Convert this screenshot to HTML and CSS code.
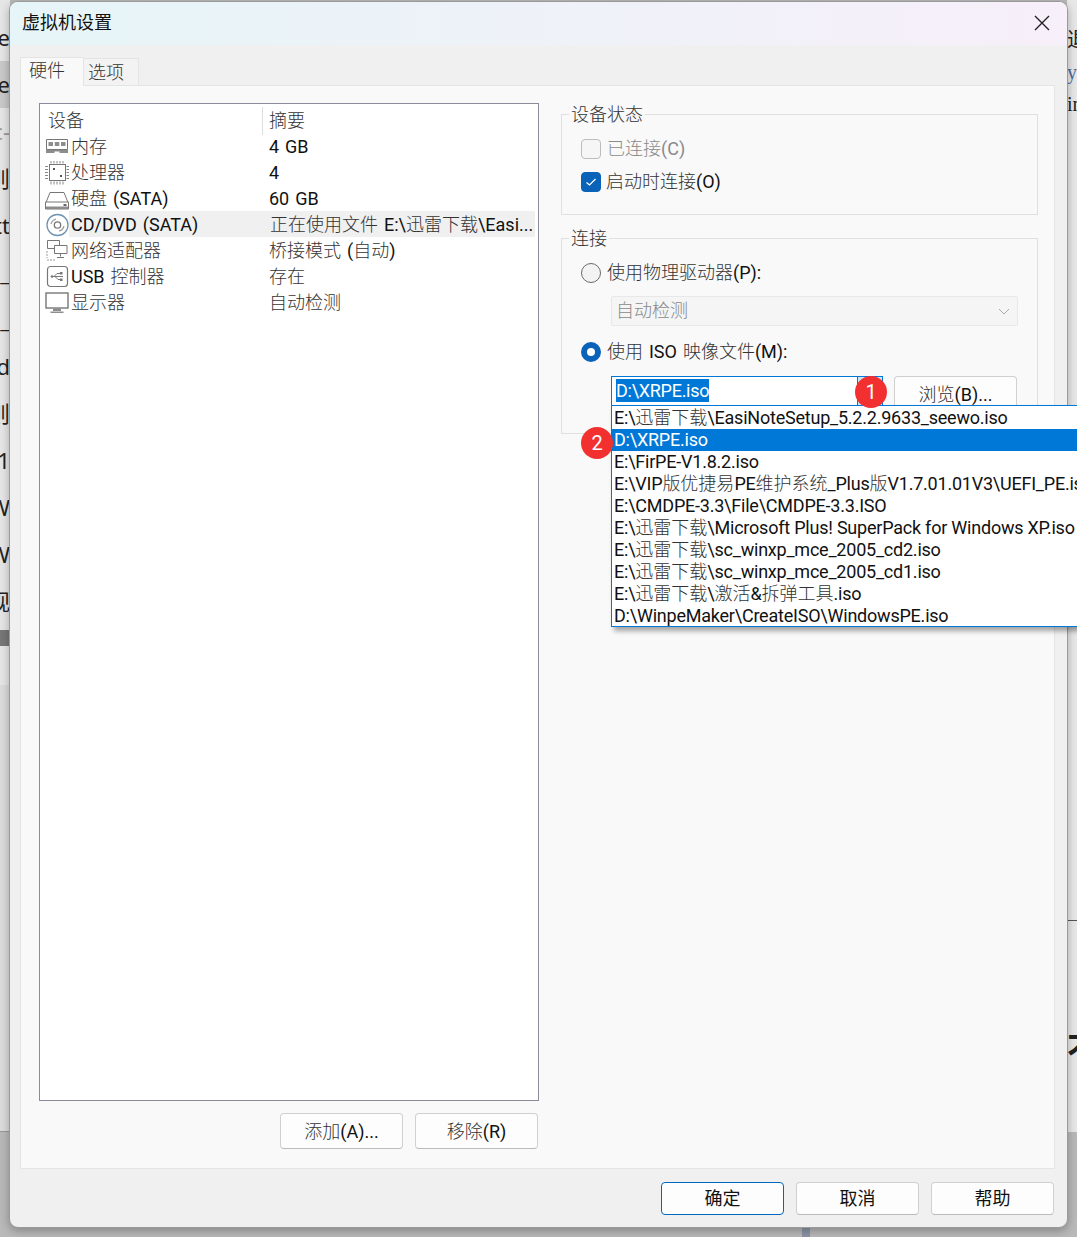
FILE: index.html
```html
<!DOCTYPE html>
<html lang="zh-CN">
<head>
<meta charset="utf-8">
<title>虚拟机设置</title>
<link rel="stylesheet" href="styles.css">
</head>
<body>
<div class="backdrop">
  <div class="bg-left">
    <div class="bg-row">Se</div>
    <div class="bg-row bg-row-hi">Se</div>
    <div class="bg-row bg-faint">c-</div>
    <div class="bg-row">则</div>
    <div class="bg-row">tt</div>
    <div class="bg-row">2_</div>
    <div class="bg-row">2_</div>
    <div class="bg-row">d</div>
    <div class="bg-row">则</div>
    <div class="bg-row">1</div>
    <div class="bg-row">W</div>
    <div class="bg-row">W</div>
    <div class="bg-row">观</div>
    <div class="bg-bar"></div>
  </div>
  <div class="bg-right">
    <div class="bg-r-row">退</div>
    <div class="bg-r-row bg-blue">y</div>
    <div class="bg-r-row">in</div>
  </div>
  <div class="bg-right-line"></div>
  <div class="bg-right-mark">不</div>
  <div class="bg-bottom"></div>
  <div class="bg-stem"></div>
</div>

<div class="dialog">
  <header class="titlebar">
    <span class="title">虚拟机设置</span>
    <svg class="close" width="16" height="16" viewBox="0 0 16 16"><path d="M1 1l14 14M15 1L1 15" stroke="#222" stroke-width="1.4" fill="none"/></svg>
  </header>
  <nav class="tabs">
    <div class="tab tab-active">硬件</div>
    <div class="tab">选项</div>
  </nav>
  <section class="panel">
    <div class="left">
      <div class="list">
        <div class="row head"><div class="c1"><span class="label zh">设备</span></div><div class="c2 sep">摘要</div></div>
        <div class="row">
          <div class="c1">
            <svg class="ico" viewBox="0 0 24 24"><path d="M1.500 4.500h21v10h-21z" fill="#fff" stroke="#777"/><path d="M3.500 7h4.500v4H3.500zM9.800 7h4.500v4H9.800zM16 7h4.500v4H16z" fill="#8d8d8d"/><path d="M1 15h22v3H14.500v-1.500h-5V18H1z" fill="#8d8d8d"/></svg>
            <span class="label zh">内存</span>
          </div>
          <div class="c2">4 GB</div>
        </div>
        <div class="row">
          <div class="c1">
            <svg class="ico" viewBox="0 0 24 24"><rect x="4.500" y="3.500" width="16" height="16" fill="#fff" stroke="#777"/><path d="M6 0v2.500M9 0v2.500M12 0v2.500M15 0v2.500M18 0v2.500M6 20.500v3M9 20.500v3M12 20.500v3M15 20.500v3M18 20.500v3M0 5.500h3M0 8.500h3M0 11.500h3M0 14.500h3M0 17.500h3M21.500 5.500h2.500M21.500 8.500h2.500M21.500 11.500h2.500M21.500 14.500h2.500M21.500 17.500h2.500" stroke="#888" fill="none"/><path d="M8 7h2v2H8zM15 14h2v2h-2z" fill="#555"/></svg>
            <span class="label zh">处理器</span>
          </div>
          <div class="c2">4</div>
        </div>
        <div class="row">
          <div class="c1">
            <svg class="ico" viewBox="0 0 24 24"><path d="M1 15.500 5 5.500h14l4 10z" fill="#fff" stroke="#777"/><path d="M.500 15h23v7H.500z" fill="#fff" stroke="#777"/><path d="M1 19.500h22V22H1z" fill="#8d8d8d"/><path d="M18.500 17h3v2h-3z" fill="#666"/></svg>
            <span class="label"><span class="zh">硬盘</span> (SATA)</span>
          </div>
          <div class="c2">60 GB</div>
        </div>
        <div class="row row-sel">
          <div class="c1">
            <svg class="ico" viewBox="0 0 24 24"><circle cx="12.500" cy="12" r="10.500" fill="#fff" stroke="#6f93b0" stroke-width="1.300"/><circle cx="12.500" cy="12" r="3.200" fill="#fff" stroke="#777" stroke-width="1.300"/><path d="M6 11a7 7 0 0 1 5-5M19 13a7 7 0 0 1-5 5" fill="none" stroke="#999" stroke-width="1.200"/></svg>
            <span class="label">CD/DVD (SATA)</span>
          </div>
          <div class="c2 c2-clip"><span class="zh">正在使用文件</span> E:\<span class="zh">迅雷下载</span>\Easi...</div>
        </div>
        <div class="row">
          <div class="c1">
            <svg class="ico" viewBox="0 0 24 24"><path d="M2.500 1.500h12v8h-12z" fill="#fff" stroke="#777"/><path d="M9.500 6.500h12.500v8H9.500z" fill="#fff" stroke="#777"/><path d="M15.500 14.500v3M12 18.500h7" stroke="#777" fill="none"/><path d="M2 12v7M2 21h8" stroke="#999" stroke-dasharray="2 1" fill="none"/></svg>
            <span class="label zh">网络适配器</span>
          </div>
          <div class="c2"><span class="zh">桥接模式</span> (<span class="zh">自动</span>)</div>
        </div>
        <div class="row">
          <div class="c1">
            <svg class="ico" viewBox="0 0 24 24"><rect x="2.500" y="1.500" width="20" height="20" rx="3" fill="#fff" stroke="#777" stroke-width="1.200"/><path d="M6 11.500h12M9 11.500l3-3h3M10 11.500l3 3h2" fill="none" stroke="#777"/><circle cx="7" cy="11.500" r="1.300" fill="#777"/><path d="M15 7h2.500v2.500H15zM15 13.500h2.500V16H15z" fill="#777"/></svg>
            <span class="label">USB <span class="zh">控制器</span></span>
          </div>
          <div class="c2 zh">存在</div>
        </div>
        <div class="row">
          <div class="c1">
            <svg class="ico" viewBox="0 0 24 24"><rect x="1" y="2" width="22" height="15" fill="#fff" stroke="#777" stroke-width="1.400"/><path d="M8 17.500h8V20H8zM5.500 20.500h13V22h-13z" fill="#8d8d8d"/></svg>
            <span class="label zh">显示器</span>
          </div>
          <div class="c2 zh">自动检测</div>
        </div>
      </div>
      <div class="list-actions">
        <button class="btn"><span class="zh">添加</span>(A)...</button>
        <button class="btn"><span class="zh">移除</span>(R)</button>
      </div>
    </div>

    <div class="right">
      <fieldset class="group group-status">
        <legend class="zh">设备状态</legend>
        <label class="opt opt-disabled"><span class="check"></span><span><span class="zh">已连接</span>(C)</span></label>
        <label class="opt"><span class="check check-on"><svg width="12" height="10" viewBox="0 0 12 10"><path d="M1.500 5.500 4.500 8 10.500 2" stroke="#fff" stroke-width="1.200" fill="none"/></svg></span><span class="tight"><span class="zh">启动时连接</span>(O)</span></label>
      </fieldset>
      <fieldset class="group group-conn">
        <legend class="zh">连接</legend>
        <label class="opt"><span class="radio"></span><span><span class="zh">使用物理驱动器</span>(P):</span></label>
        <div class="select"><span class="zh">自动检测</span><svg width="12" height="7" viewBox="0 0 12 7"><path d="M1 1l5 5 5-5" stroke="#aaa" fill="none"/></svg></div>
        <label class="opt opt-iso"><span class="radio radio-on"></span><span><span class="zh">使用</span> ISO <span class="zh">映像文件</span>(M):</span></label>
        <div class="iso-row">
          <div class="combo"><span class="combo-text"><span class="selected-text">D:\XRPE.iso</span></span><span class="combo-arrow"></span></div>
          <button class="btn btn-browse"><span class="zh">浏览</span>(B)...</button>
        </div>
      </fieldset>
    </div>
  </section>
  <footer class="footer">
    <button class="btn btn-foot btn-default zh">确定</button>
    <button class="btn btn-foot zh">取消</button>
    <button class="btn btn-foot zh">帮助</button>
  </footer>
</div>

<ul class="dropdown">
  <li>E:\<span class="zh">迅雷下载</span>\EasiNoteSetup_5.2.2.9633_seewo.iso</li>
  <li class="li-sel">D:\XRPE.iso</li>
  <li>E:\FirPE-V1.8.2.iso</li>
  <li>E:\VIP<span class="zh">版优捷易</span>PE<span class="zh">维护系统</span>_Plus<span class="zh">版</span>V1.7.01.01V3\UEFI_PE.iso</li>
  <li>E:\CMDPE-3.3\File\CMDPE-3.3.ISO</li>
  <li>E:\<span class="zh">迅雷下载</span>\Microsoft Plus! SuperPack for Windows XP.iso</li>
  <li>E:\<span class="zh">迅雷下载</span>\sc_winxp_mce_2005_cd2.iso</li>
  <li>E:\<span class="zh">迅雷下载</span>\sc_winxp_mce_2005_cd1.iso</li>
  <li>E:\<span class="zh">迅雷下载</span>\<span class="zh">激活</span>&amp;<span class="zh">拆弹工具</span>.iso</li>
  <li>D:\WinpeMaker\CreateISO\WindowsPE.iso</li>
</ul>
<span class="badge badge-1">1</span>
<span class="badge badge-2">2</span>
</body>
</html>
```
FILE: styles.css
```css
* { box-sizing: border-box; }
html, body { margin: 0; padding: 0; }
body {
  width: 1077px;
  height: 1237px;
  position: relative;
  overflow: hidden;
  background: #b9b9b9;
  font: 18px/24px Roboto, "Noto Sans CJK SC", sans-serif;
  word-spacing: 1.5px;
  color: #111;
}
.zh { font-weight: 300; color: #333; letter-spacing: 0; }
.backdrop { position: absolute; inset: 0; overflow: hidden; }
.bg-left {
  position: absolute; left: 0; top: 14px; width: 10px; height: 671px;
  background: #e6e6e6; overflow: hidden;
  font: 22px/47px "Noto Sans", "Noto Sans CJK SC", sans-serif;
  box-shadow: 0 -14px 0 #e6e6e6;
}
.bg-row { height: 47px; display: flex; justify-content: flex-end; white-space: nowrap; color: #222; }
.bg-row-hi { background: #c9c9c9; }
.bg-faint { color: #999; }
.bg-bar { height: 16px; margin-top: 5px; background: #777; }
.bg-right {
  position: absolute; left: 1067px; top: 0; width: 10px; height: 1132px;
  background: #e8e8e8; overflow: hidden; padding-top: 24px;
  font: 20px/32px "Liberation Serif", "Noto Sans CJK SC", serif;
  color: #222;
}
.bg-r-row { height: 32px; white-space: nowrap; }
.bg-blue { color: #4b6a99; }
.bg-right-line { position: absolute; left: 1067px; top: 920px; width: 10px; height: 20px; border-top: 1px solid #555; border-left: 1px solid #3c5a80; }
.bg-right-mark {
  position: absolute; left: 1067px; top: 1028px; width: 10px; overflow: hidden;
  font: 700 32px/36px "Noto Sans CJK SC", sans-serif; color: #222;
}
.bg-bottom { position: absolute; left: 0; top: 685px; width: 10px; height: 447px; background: #dcdcdc; border-bottom: 1px solid #999; }
.bg-stem { position: absolute; left: 802px; top: 1225px; width: 8px; height: 12px; background: #8b94a6; }

.dialog {
  position: absolute; left: 9px; top: 1px;
  width: 1059px; height: 1227px;
  background: #f0f0f0;
  border: 1px solid #9a9a9a;
  border-radius: 9px;
  box-shadow: 0 3px 10px rgba(0,0,0,.28);
  display: flex; flex-direction: column;
  overflow: hidden;
}
.titlebar {
  height: 43px; flex: none;
  display: flex; align-items: center; justify-content: space-between;
  padding: 0 17px 2px 12px;
  background: linear-gradient(90deg, #e6f5f8, #f7eff9);
}
.title { color: #111; font-weight: 400; }
.close { flex: none; }
.tabs { display: flex; align-items: flex-end; height: 40px; flex: none; padding-left: 10px; }
.tab { width: 56px; height: 27px; background: #f3f3f3; border: 1px solid #e4e4e4; border-bottom: 0; font-weight: 300; color: #333; line-height: 27px; text-align: left; padding-left: 4px; }
.tab-active { width: 63px; background: #f9f9f9; border-right: 0; position: relative; z-index: 1; margin-bottom: -1px; height: 29px; padding-left: 8px; line-height: 26px; }
.panel {
  margin: 0 12px 0 10px;
  height: 1084px; flex: none;
  background: #f9f9f9;
  border: 1px solid #e5e5e5;
  padding: 17px 16px 18px 18px;
  display: grid; grid-template-columns: 500px 477px; column-gap: 22px;
}
.left { display: flex; flex-direction: column; }
.list { height: 998px; background: #fff; border: 1px solid #8b8b9b; padding: 3px 3px 0 0; }
.row { display: grid; grid-template-columns: 222px 1fr; height: 26px; line-height: 28px; white-space: nowrap; }
.c1 { display: flex; align-items: center; padding-left: 5px; }
.c2 { padding-left: 7px; }
.head .c1 { padding-left: 8px; }
.sep { border-left: 1px solid #ddd; padding-left: 6px; font-weight: 300; color: #333; }
.ico { width: 24px; height: 24px; flex: none; margin-right: 2px; }
.row-sel { background: linear-gradient(90deg, #fff 0, #fff 29px, #f0f0f0 29px); }
.c2-clip { overflow: hidden; padding-left: 8px; }
.list-actions { display: flex; justify-content: flex-end; gap: 12px; margin-top: 12px; padding-right: 1px; }
.btn {
  width: 123px; height: 36px;
  background: #fdfdfd; border: 1px solid #d0d0d0; border-bottom-color: #bbb; border-radius: 4px;
  font: inherit; word-spacing: inherit; color: #111; padding: 2px 0 0; white-space: nowrap;
}

.right { display: flex; flex-direction: column; }
.group { margin: 0; border: 1px solid #e0e0e0; padding: 0 19px; min-width: 0; }
.group legend { margin-left: -12px; padding: 2px 2px 0; line-height: 24px; font-weight: 300; color: #333; }
.group-status { height: 114px; margin-top: -2px; padding-top: 5px; }
.group-conn { height: 209px; margin-top: 10px; padding-top: 5px; }
.opt { display: flex; align-items: center; gap: 6px; height: 33px; }
.tight { margin-left: -1px; }
.opt-disabled, .opt-disabled .zh { color: #8a8a8a; }
.check { width: 20px; height: 20px; border: 1px solid #bdbdbd; border-radius: 4px; background: #f6f6f6; flex: none; display: flex; align-items: center; justify-content: center; }
.check-on { background: #0a63b8; border-color: #0a63b8; }
.radio { width: 20px; height: 20px; border: 1px solid #6a6a6a; border-radius: 50%; background: #f3f3f3; flex: none; }
.radio-on { border: 6px solid #0a63b8; background: #fff; }
.select {
  margin: 7px 0 0 30px; width: 407px; height: 30px;
  background: #f5f5f5; border: 1px solid #e8e8e8; border-radius: 2px;
  display: flex; align-items: center; justify-content: space-between;
  padding: 0 7px 0 4px;
}
.select .zh { color: #888; }
.opt-iso { margin-top: 9px; }
.iso-row { display: flex; gap: 11px; margin: 8px 0 0 30px; align-items: flex-start; }
.combo { width: 272px; height: 30px; background: #fff; border: 1px solid #0078d7; display: flex; }
.combo-text { flex: 1; padding-left: 4px; line-height: 27px; letter-spacing: -.27px; }
.selected-text { background: #0078d7; color: #fff; display: inline-block; line-height: 23px; margin-top: 2px; }
.combo-arrow { width: 25px; background: #cce4f7; border-left: 1px solid #0078d7; }
.btn-browse { height: 36px; }

.footer { display: flex; justify-content: flex-end; gap: 12px; padding: 13px 13px 0 0; }
.btn-foot { height: 33px; padding-top: 0; }
.btn-default { border: 1px solid #0067c0; }

.dropdown {
  position: absolute; left: 611px; top: 405px; width: 480px; height: 222px;
  margin: 0; padding: 1px 0 0 3px; list-style: none;
  background: #fff; border: 1px solid #0078d7;
  box-shadow: 3px 4px 5px rgba(0,0,0,.35);
  white-space: nowrap; overflow: hidden; letter-spacing: -.22px; word-spacing: 0;
}
.dropdown li { height: 22px; line-height: 22px; margin-left: -3px; padding-left: 2px; }
.li-sel { background: #0078d7; color: #fff; }
.badge {
  position: absolute; width: 32px; height: 32px; border-radius: 50%;
  background: #f23030; color: #fff; text-align: center; line-height: 32px;
  font-size: 20px;
}
.badge-1 { left: 855px; top: 376px; }
.badge-2 { left: 581px; top: 427px; }
```
